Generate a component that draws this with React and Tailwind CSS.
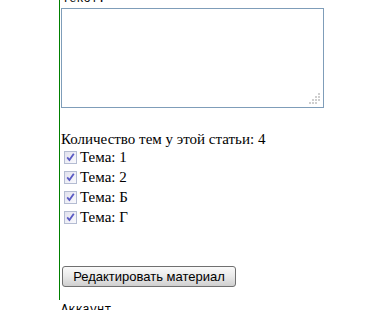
import { useState } from "react";

const topics = ["1", "2", "Б", "Г"];

function Check({ checked }) {
  return (
    <span className="inline-flex h-[13px] w-[13px] shrink-0 items-center justify-center border border-[#b4bcd2] bg-gradient-to-br from-[#e2e2ee] to-[#fafafd]">
      {checked && (
        <svg width="9" height="9" viewBox="0 0 9 9">
          <path d="M1.2 4.4 L3.4 7 L7.8 0.8" fill="none" stroke="#5b5bc4" strokeWidth="1.8" />
        </svg>
      )}
    </span>
  );
}

export default function App() {
  const [text, setText] = useState("");
  return (
    <div className="h-[310px] overflow-hidden bg-white text-black">
      <div className="ml-[59px] h-full border-l border-[#008000] pl-[1px]">
        <div className="-mt-[10px] h-[18px] pl-[1px] font-['Liberation_Mono',monospace] text-[12px] leading-[18px]">
          Текст:
        </div>
        <div className="relative h-[100px] w-[263px]">
          <textarea
            value={text}
            onChange={(e) => setText(e.target.value)}
            className="block h-full w-full resize-none border border-[#7f9db9] bg-white outline-none"
          />
          <svg className="absolute bottom-[3px] right-[3px]" width="13" height="13" viewBox="0 0 13 13">
            <g fill="#cfcfcf">
              <rect x="10" y="1" width="2" height="2" />
              <rect x="7" y="4" width="2" height="2" />
              <rect x="10" y="4" width="2" height="2" />
              <rect x="4" y="7" width="2" height="2" />
              <rect x="7" y="7" width="2" height="2" />
              <rect x="10" y="7" width="2" height="2" />
              <rect x="1" y="10" width="2" height="2" />
              <rect x="4" y="10" width="2" height="2" />
              <rect x="7" y="10" width="2" height="2" />
            </g>
          </svg>
        </div>
        <div className="font-['Liberation_Serif',serif] text-[15px]">
          <div className="mt-[22px] h-[17px] leading-[18px]">Количество тем у этой статьи: 4</div>
          {topics.map((t) => (
            <label key={t} className="flex h-5 items-center pl-[3px]">
              <Check checked />
              <span className="ml-[3px] leading-[18px]">Тема: {t}</span>
            </label>
          ))}
        </div>
        <button className="ml-[1px] mt-[39px] flex h-[21px] w-[174px] items-center justify-center rounded-[3px] border border-[#707070] bg-gradient-to-b from-[#fafafa] via-[#e9e9e9] to-[#cfcfcf] font-['Liberation_Sans',sans-serif] text-[13px]">
          Редактировать материал
        </button>
        <div className="mt-[14px] font-['Liberation_Mono',monospace] text-[12px] leading-[18px]">
          Аккаунт
        </div>
      </div>
    </div>
  );
}
